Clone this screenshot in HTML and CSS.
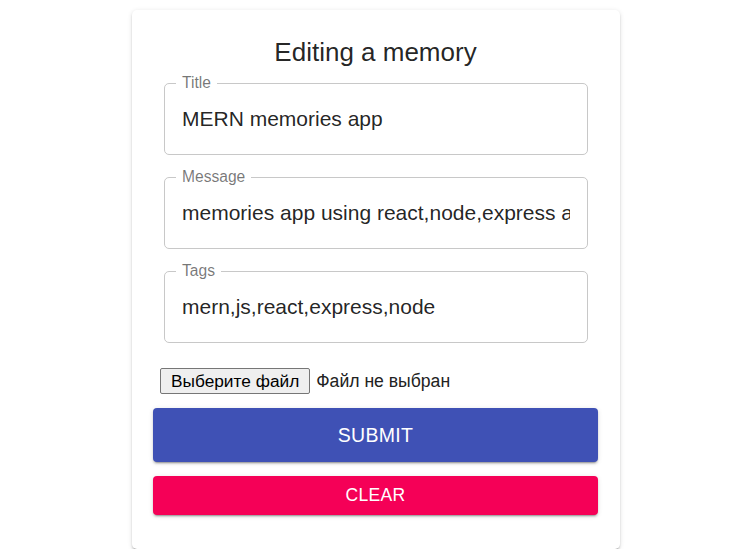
FILE: index.html
```html
<!DOCTYPE html>
<html lang="ru">
<head>
<meta charset="utf-8">
<title>Editing a memory</title>
<link rel="stylesheet" href="styles.css">
</head>
<body>
<div class="page">
  <form class="card">
    <h2 class="heading">Editing a memory</h2>
    <div class="fields">
      <div class="field">
        <span class="field-label">Title</span>
        <input class="field-input" type="text" value="MERN memories app">
      </div>
      <div class="field">
        <span class="field-label">Message</span>
        <input class="field-input" type="text" value="memories app using react,node,express and mongodb">
      </div>
      <div class="field">
        <span class="field-label">Tags</span>
        <input class="field-input" type="text" value="mern,js,react,express,node">
      </div>
    </div>
    <div class="file-row">
      <button type="button" class="file-btn">Выберите файл</button>
      <span class="file-name">Файл не выбран</span>
    </div>
    <button type="button" class="btn btn-submit">SUBMIT</button>
    <button type="button" class="btn btn-clear">CLEAR</button>
  </form>
</div>
</body>
</html>
```

FILE: styles.css
```css
* { box-sizing: border-box; }

html, body {
  margin: 0;
  padding: 0;
  background: #ffffff;
  font-family: "Liberation Sans", Arial, sans-serif;
}

.page {
  padding: 10px 0 0 132px;
}

.card {
  width: 488px;
  margin: 0;
  padding: 25px 22px 34px 21px;
  background: #fff;
  border-radius: 5px;
  box-shadow: 0 3px 1px -2px rgba(0,0,0,0.2), 0 2px 2px 0 rgba(0,0,0,0.14), 0 1px 5px 0 rgba(0,0,0,0.12);
  display: flex;
  flex-direction: column;
}

.heading {
  margin: 0;
  font-size: 26px;
  line-height: 34px;
  font-weight: 400;
  text-align: center;
  color: rgba(0,0,0,0.87);
}

.fields {
  display: flex;
  flex-direction: column;
  gap: 22px;
  margin: 14px 10px 0 11px;
}

.field {
  position: relative;
  height: 72px;
  border: 1px solid #c8c8c8;
  border-radius: 5px;
  display: flex;
  align-items: center;
  padding: 0 17px;
}

.field-label {
  position: absolute;
  top: -10px;
  left: 11px;
  padding: 0 6px;
  background: #fff;
  font-size: 15.6px;
  line-height: 18px;
  color: rgba(0,0,0,0.54);
}

.field-input {
  width: 100%;
  border: none;
  outline: none;
  padding: 0;
  margin: 0;
  background: transparent;
  font-family: "Liberation Sans", Arial, sans-serif;
  font-size: 21px;
  line-height: 26px;
  color: rgba(0,0,0,0.87);
}

.file-row {
  display: flex;
  align-items: center;
  gap: 6px;
  margin: 25px 0 0 7px;
}

.file-btn {
  height: 26px;
  padding: 0 10px;
  font-family: "Liberation Sans", Arial, sans-serif;
  font-size: 17.3px;
  color: #000;
  background: #efefef;
  border: 1px solid #767676;
  border-radius: 2px;
}

.file-name {
  font-size: 17.6px;
  color: #222;
}

.btn {
  width: 100%;
  border: none;
  border-radius: 4px;
  color: #fff;
  font-family: "Liberation Sans", Arial, sans-serif;
  letter-spacing: 0.3px;
  box-shadow: 0 3px 1px -2px rgba(0,0,0,0.2), 0 2px 2px 0 rgba(0,0,0,0.14), 0 1px 5px 0 rgba(0,0,0,0.12);
}

.btn-submit {
  margin-top: 14px;
  height: 54px;
  background: #3f51b5;
  font-size: 19.5px;
}

.btn-clear {
  margin-top: 14px;
  height: 39px;
  background: #f50057;
  font-size: 17.5px;
}
```
